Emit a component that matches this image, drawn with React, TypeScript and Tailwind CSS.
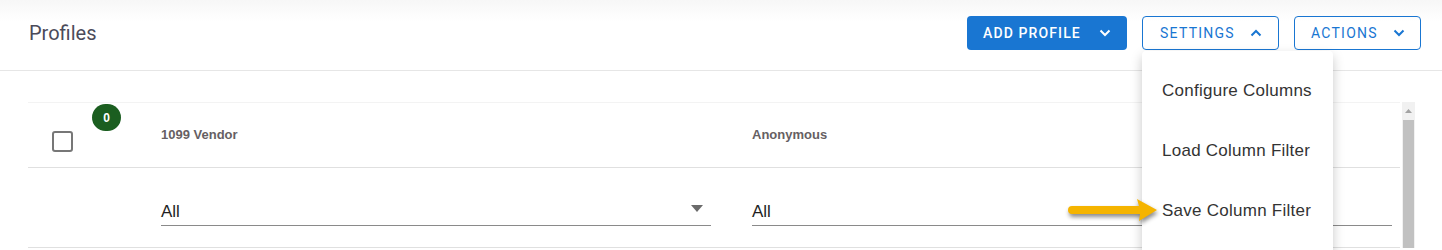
import React from "react";

const font = { fontFamily: '"Liberation Sans", Arial, sans-serif' };
const roboto = { fontFamily: 'Roboto, "Liberation Sans", sans-serif' };

function Chevron({ up = false }: { up?: boolean }) {
  return (
    <svg width="12" height="8" viewBox="0 0 12 8" className="ml-auto">
      <path
        d={up ? "M1.5 6.5 L6 2 L10.5 6.5" : "M1.5 1.5 L6 6 L10.5 1.5"}
        fill="none"
        stroke="currentColor"
        strokeWidth="2"
      />
    </svg>
  );
}

function FilterSelect({ arrow = true }: { arrow?: boolean }) {
  return (
    <div className="relative flex h-[30px] items-center border-b border-[#8a8a8a] pt-[3px]">
      <span className="text-[17px] text-[#1f1f1f]" style={font}>
        All
      </span>
      {arrow && (
        <svg
          width="12"
          height="7"
          viewBox="0 0 12 7"
          className="absolute right-[8px] top-[9px]"
        >
          <path d="M0 0 H12 L6 7 Z" fill="#6b6b6b" />
        </svg>
      )}
    </div>
  );
}

function ArrowNote() {
  return (
    <svg
      width="96"
      height="30"
      viewBox="0 0 96 30"
      className="absolute left-[1066px] top-[196px]"
      style={{ filter: "drop-shadow(1px 3px 2px rgba(0,0,0,0.45))" }}
    >
      <path
        d="M6 10 H73 L71 3 L91 14 L73 25 L74 18 H6 A4 4 0 0 1 6 10 Z"
        fill="#f5b400"
      />
    </svg>
  );
}

export default function App() {
  return (
    <div className="relative h-[250px] w-[1442px] overflow-hidden bg-white">
      <header className="flex h-[71px] items-start justify-between border-b border-[#e6e6e6] bg-[linear-gradient(#f7f7f7,#ffffff_22px)] pl-[29px] pr-[21px] pt-[16px]">
        <h1
          className="mt-[5px] text-[20px] leading-[24px] text-[#4b4b5a]"
          style={roboto}
        >
          Profiles
        </h1>
        <div className="flex items-center gap-[15px]" style={roboto}>
          <button className="flex h-[34px] w-[160px] items-center rounded-[4px] bg-[#1976d2] pl-[16px] pr-[16px] text-[14px] font-medium tracking-[0.08em] text-white">
            ADD PROFILE
            <Chevron />
          </button>
          <button className="flex h-[34px] w-[137px] items-center rounded-[4px] border border-[#1976d2] pl-[17px] pr-[16px] text-[14px] tracking-[0.09em] text-[#1976d2]">
            SETTINGS
            <Chevron up />
          </button>
          <button className="flex h-[34px] w-[127px] items-center rounded-[4px] border border-[#1976d2] pl-[16px] pr-[15px] text-[14px] tracking-[0.09em] text-[#1976d2]">
            ACTIONS
            <Chevron />
          </button>
        </div>
      </header>

      <div className="ml-[28px] mt-[31px] flex w-[1387px]">
        <div className="flex-1 border-t border-[#f3f3f3]">
          <div className="flex h-[65px] items-center border-b border-[#e0e0e0]">
            <div className="relative h-full w-[133px]">
              <div className="absolute left-[24px] top-[28px] h-[21px] w-[21px] rounded-[3px] border-2 border-[#777]" />
              <div
                className="absolute left-[64px] top-[1px] flex h-[27px] w-[29px] items-center justify-center rounded-full bg-[#1b5e20] text-[12px] font-bold text-white"
                style={font}
              >
                0
              </div>
            </div>
            <div
              className="w-[591px] text-[13px] font-bold text-[#665f63]"
              style={font}
            >
              1099 Vendor
            </div>
            <div
              className="flex-1 text-[13px] font-bold text-[#665f63]"
              style={font}
            >
              Anonymous
            </div>
          </div>
          <div className="flex h-[80px] items-center border-b border-[#e0e0e0] pt-[6px]">
            <div className="w-[133px]" />
            <div className="w-[591px] pr-[41px]">
              <FilterSelect />
            </div>
            <div className="flex-1 pr-[8px]">
              <FilterSelect arrow={false} />
            </div>
          </div>
        </div>
        <div className="ml-[2px] flex w-[13px] flex-col bg-[#f1f1f1]">
          <div className="flex h-[18px] items-center justify-center">
            <svg width="7" height="4" viewBox="0 0 7 4">
              <path d="M0 4 L3.5 0 L7 4 Z" fill="#a3a3a3" />
            </svg>
          </div>
          <div className="mx-[1px] flex-1 bg-[#c1c1c1]" />
        </div>
      </div>

      <div
        className="absolute left-[1142px] top-[51px] h-[220px] w-[191px] rounded-[4px] bg-white pt-[10px] shadow-[0_5px_12px_rgba(0,0,0,0.22)]"
        style={font}
      >
        {["Configure Columns", "Load Column Filter", "Save Column Filter"].map(
          (label) => (
            <div
              key={label}
              className="flex h-[60px] items-center pl-[20px] text-[17px] tracking-[0.015em] text-[#333]"
            >
              {label}
            </div>
          ),
        )}
      </div>

      <ArrowNote />
    </div>
  );
}
